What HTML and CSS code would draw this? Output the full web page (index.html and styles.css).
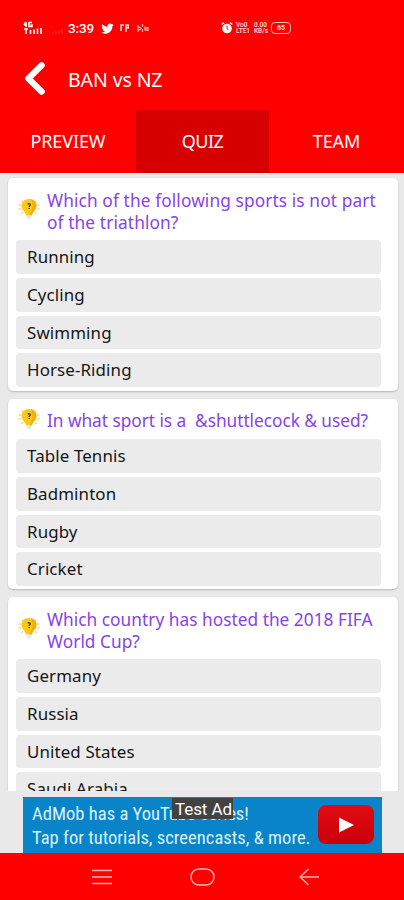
FILE: index.html
```html
<!DOCTYPE html>
<html lang="en">
<head>
<meta charset="utf-8">
<title>BAN vs NZ</title>
<link rel="stylesheet" href="styles.css">
</head>
<body>
<svg class="defs" aria-hidden="true">
  <symbol id="bulb" viewBox="0 0 24 24">
    <path d="M4.500 3.500l2 1.400M1.500 8h2.700M1.300 12h2.900M4 17l2-1.800M19.500 3.500l-2 1.400M22.500 8h-2.700M22.700 12h-2.900M20 17l-2-1.800" stroke="#f6dc7c" stroke-width="1.400"/>
    <path d="M12 2c-4.600 0-7.500 3-7.500 7 0 4 3.700 5.500 4.500 9.500h6c.8-4 4.500-5.500 4.500-9.500 0-4-2.900-7-7.500-7z" fill="#ffc814"/>
    <path d="M14 2.300c6.500 1.700 7 8.500 2.700 12.200-1.200 1.100-1.500 2.500-1.700 4h-3c3-4 5-9 2-16.200z" fill="#f3af0b"/>
    <path d="M9.500 19.500h5M10.500 21.500h3" stroke="#d5ebee" stroke-width="1.800"/>
    <path d="M10.700 7.300c1-1 2.900-.5 2.500.8-.2.700-1 .9-1 1.900M12.200 11v1" fill="none" stroke="#4b4524" stroke-width="1.400"/>
  </symbol>
</svg>
<header class="top">
  <div class="status">
    <svg class="signal" viewBox="0 0 40 14"><path d="M1 4h3M3 1L1 4M3 1v5M9 1.500H6v4h3V4H7.500M1 8h4M3 8v5M7.500 9v4M11 8.500V13M14.500 7.500V13M18 7V13" fill="none" stroke="#fff" stroke-width="1.600"/><path d="M30 11v2M33 10v3M36 9v4M39 8v5" stroke="#ff3838"/></svg>
    <span class="clock">3:39</span>
    <svg class="bird" viewBox="0 0 24 24"><path fill="#fff" d="M23.500 5c-.8.400-1.700.6-2.600.7.900-.6 1.600-1.400 2-2.500-.9.500-1.900.9-2.900 1.100a4.700 4.700 0 0 0-8 4.300C8 8.400 4.600 6.500 2.200 3.700c-1.200 2.100-.6 4.900 1.500 6.300-.8 0-1.500-.2-2.100-.6 0 2.300 1.600 4.200 3.700 4.700-.7.200-1.400.2-2.100.1.600 1.900 2.300 3.200 4.400 3.200A9.500 9.500 0 0 1 .7 19.400 13.400 13.400 0 0 0 21.200 7.500c.9-.7 1.700-1.500 2.300-2.500z"/></svg>
    <svg class="mini-rp" viewBox="0 0 10 10"><path d="M1 8V2h3M6 9V2h2.200v3H6" fill="none" stroke="#ffdada" stroke-width="1.500"/></svg>
    <svg class="mini-cast" viewBox="0 0 12 10"><path d="M1 3v5l3-2.500zM5.500 1v3M5.500 6v3M8 3.500v4M11 4.500c-3 0-3 3 0 3z" fill="none" stroke="#ffb0b0" stroke-width="1.200"/></svg>
    <svg class="alarm" viewBox="0 0 12 12"><circle cx="6" cy="6.500" r="4.800" fill="#fff"/><path d="M.7 2.500L3 .7M11.300 2.500L9 .7" stroke="#fff" stroke-width="1.500"/><path d="M6 3.500v3.200l1.500 1" fill="none" stroke="#f00"/></svg>
    <span class="tiny volte">Vo0<br>LTE1</span>
    <span class="tiny speed">0.00<br>KB/s</span>
    <span class="battery">65</span>
  </div>
  <div class="titlebar">
    <svg class="back" viewBox="0 0 20 32"><path d="M17 3.200L4 16l13 12.800" fill="none" stroke="#fff" stroke-width="6" stroke-linecap="round" stroke-linejoin="round"/></svg>
    <h1>BAN vs NZ</h1>
  </div>
  <nav class="tabs"><a><span>PREVIEW</span></a><a class="active"><span>QUIZ</span></a><a><span>TEAM</span></a></nav>
</header>
<main class="list">
  <section class="card">
    <div class="question"><svg class="bulb"><use href="#bulb"/></svg><h2><span class="q1">Which of the following sports is not part</span><br><span class="q1">of the triathlon?</span></h2></div>
    <ul><li>Running</li><li>Cycling</li><li>Swimming</li><li>Horse-Riding</li></ul>
  </section>
  <section class="card single">
    <div class="question"><svg class="bulb"><use href="#bulb"/></svg><h2><span class="q3">In what sport is a&nbsp; &amp;shuttlecock &amp; used?</span></h2></div>
    <ul><li>Table Tennis</li><li>Badminton</li><li>Rugby</li><li>Cricket</li></ul>
  </section>
  <section class="card">
    <div class="question"><svg class="bulb"><use href="#bulb"/></svg><h2><span class="q4">Which country has hosted the 2018 FIFA</span><br><span class="q4">World Cup?</span></h2></div>
    <ul><li>Germany</li><li>Russia</li><li>United States</li><li>Saudi Arabia</li></ul>
  </section>
</main>
<aside class="ad">
  <div class="banner">
    <p>AdMob has a YouTube series!<br>Tap for tutorials, screencasts, &amp; more.</p>
    <span class="play"><svg viewBox="0 0 16 16"><path d="M0 0l16 8-16 8z" fill="#fff"/></svg></span>
    <span class="test">Test Ad</span>
  </div>
</aside>
<footer class="sysnav">
  <svg viewBox="0 0 20 16"><path d="M0 1.500h20M0 8h20M0 14.500h20" stroke="#ffb3b3" stroke-width="1.500"/></svg>
  <svg class="home" viewBox="0 0 26 18"><rect x="1" y="1" width="23" height="16" rx="8" fill="none" stroke="#ffb3b3" stroke-width="1.500"/></svg>
  <svg viewBox="0 0 20 18"><path d="M9.500 1L1 9l8.500 8M1 9h19" fill="none" stroke="#ffb3b3" stroke-width="1.500"/></svg>
</footer>
</body>
</html>
```
FILE: styles.css
```css
* { box-sizing: border-box; }
body { margin: 0; width: 404px; height: 900px; overflow: hidden; display: flex; flex-direction: column; background: #e9e9e9; font-family: "Noto Sans", sans-serif; }
h1, h2, p, ul { margin: 0; padding: 0; font-weight: 400; }
ul { list-style: none; }
span, p { white-space: nowrap; }
.defs { position: absolute; width: 0; height: 0; }

.top { flex: none; height: 173px; background: #fe0000; color: #fff; display: flex; flex-direction: column; }
.status { height: 56px; padding-left: 23px; display: flex; align-items: center; }
.signal { width: 40px; height: 14px; }
.clock { margin-left: 5px; width: 27px; font: 500 13.500px/16px Roboto, sans-serif; letter-spacing: -0.1px; }
.bird { width: 13px; height: 13px; margin-left: 6px; }
.mini-rp { width: 10px; height: 10px; margin-left: 6px; }
.mini-cast { width: 12px; height: 10px; margin-left: 7px; }
.alarm { width: 12px; height: 12px; margin-left: 72px; }
.tiny { font: 500 6.500px/6.500px Roboto, sans-serif; width: 13px; color: #ffe0e0; }
.volte { margin-left: 3px; }
.speed { margin-left: 5px; }
.battery { margin-left: 4px; width: 20px; height: 12px; border: 1.500px solid #ffc0c0; border-radius: 4px; font: 700 7px/10px Roboto, sans-serif; text-align: center; color: #ffe0e0; }
.titlebar { height: 54px; padding: 6px 0 0 24px; display: flex; }
.back { width: 21px; height: 33px; }
h1 { margin: 0 0 0 23px; font-size: 19.500px; line-height: 35px; letter-spacing: -0.1px; }
.tabs { flex: 1; display: grid; grid-template-columns: 136px 133px 135px; }
.tabs a { display: flex; align-items: center; justify-content: center; padding-bottom: 2px; font-size: 18px; letter-spacing: -0.1px; }
.tabs .active { background: #d70000; border-radius: 3px 3px 0 0; letter-spacing: -0.5px; }

.list { flex: none; height: 618px; overflow: hidden; border-top: 1px solid #fafafa; padding: 4px 6px 0 8px; display: flex; flex-direction: column; gap: 8px; }
.card { flex: none; height: 213px; border-radius: 5px; background: #fff; box-shadow: 0 1px 2px rgba(0,0,0,.22); }
.question { height: 62px; display: flex; padding: 12px 0 0 9px; }
.bulb { width: 24px; height: 24px; flex: none; margin-top: 7px; }
h2 { margin-left: 6px; font-size: 17.300px; line-height: 22px; color: #8643e8; }
.q1 { letter-spacing: 0.11px; }
.q3 { letter-spacing: -0.04px; }
.q4 { letter-spacing: 0.02px; }
.single { height: 190px; }
.single .question { height: 40px; padding-top: 11px; }
.single .bulb { margin-top: -3px; }
ul { display: grid; gap: 4px; padding: 0 17px 0 8px; }
li { height: 33.800px; border-radius: 4px; background: #ebebeb; padding-left: 11px; font-size: 16.900px; letter-spacing: 0.12px; line-height: 33px; color: #161616; }

.ad { height: 62px; padding: 6px 22px 0 23px; }
.banner { position: relative; height: 56px; background: #0a84c8; color: #d8f2ff; display: flex; padding: 5px 8px 0 9px; }
.banner p { flex: 1; width: 0; font: 18.600px/24px Roboto, sans-serif; font-stretch: 75%; }
.play { width: 56px; height: 39px; margin-top: 3px; border-radius: 8px; background: linear-gradient(#e20b12, #c9000a); display: grid; place-items: center; }
.play svg { width: 15px; height: 16px; }
.test { position: absolute; left: 149px; top: 1px; width: 61px; height: 21px; padding-left: 3px; background: #424242; color: #fff; font: 17px/22px Roboto, sans-serif; letter-spacing: -0.1px; }
.sysnav { flex: none; height: 47px; background: #fe0000; display: flex; align-items: center; padding-left: 92px; }
.sysnav svg { width: 20px; height: 18px; }
.sysnav .home { width: 26px; margin: 0 83px 0 78px; }
```
